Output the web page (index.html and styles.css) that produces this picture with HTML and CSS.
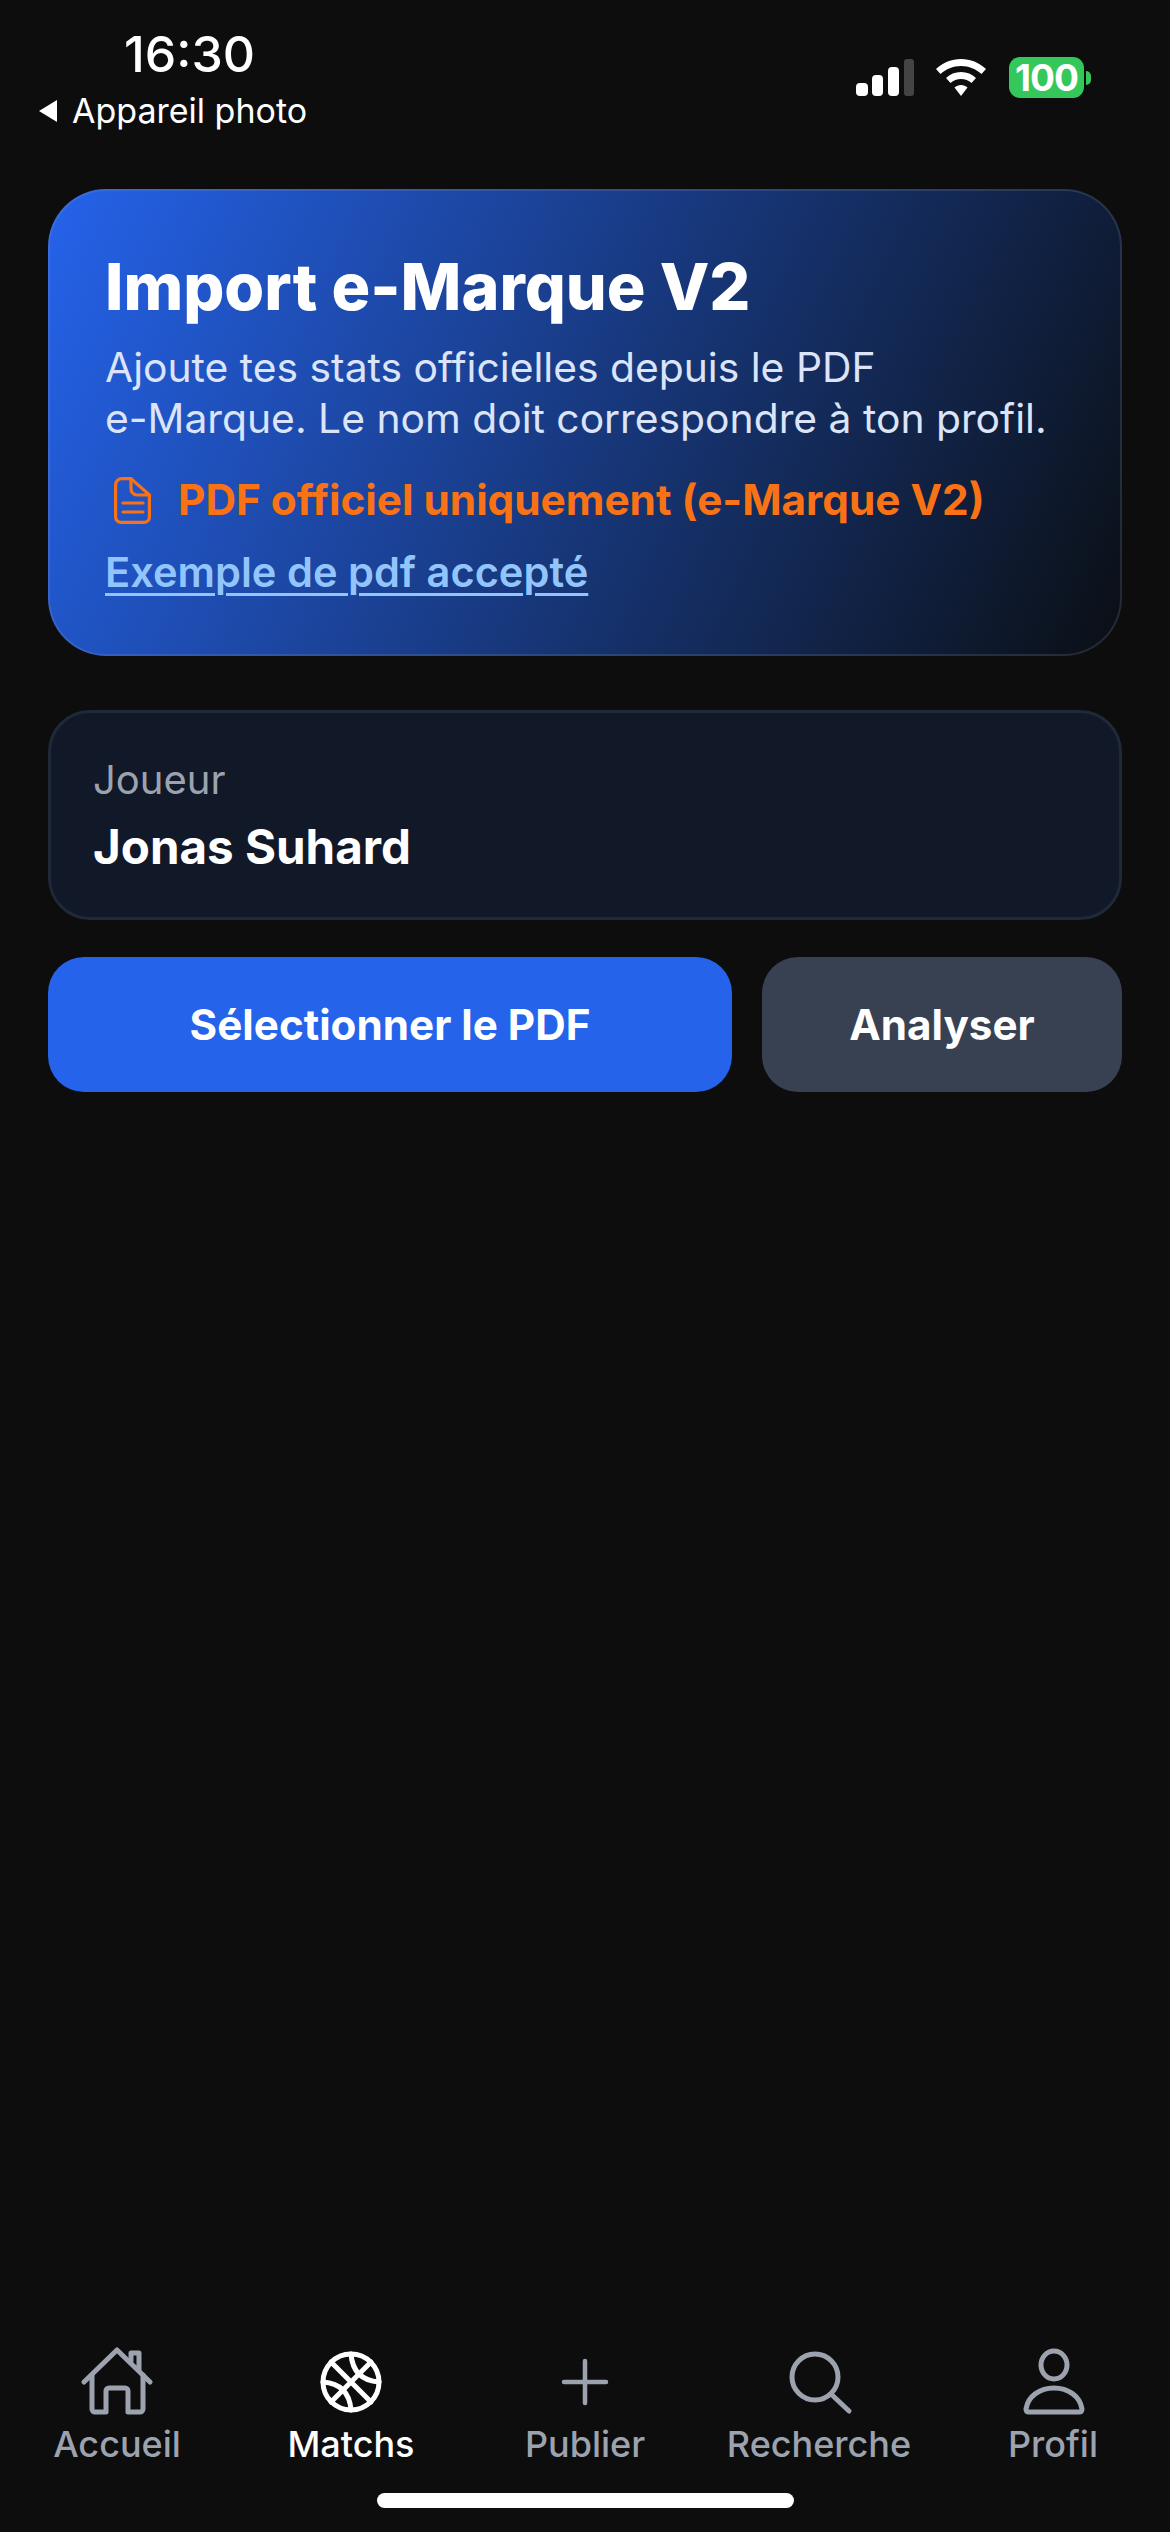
FILE: index.html
```html
<!DOCTYPE html>
<html lang="fr">
<head>
  <meta charset="UTF-8">
  <meta name="viewport" content="width=device-width, initial-scale=1.0">
  <title>Import e-Marque V2</title>
  <link rel="stylesheet" href="styles.css">
</head>
<body>
  <header class="status">
    <div class="status-left">
      <div class="time">16:30</div>
      <div class="back">
        <svg class="back-arrow" viewBox="0 0 20 24"><path d="M19 1V23L1 12Z"/></svg>
        <span>Appareil photo</span>
      </div>
    </div>
    <div class="status-right">
      <svg class="signal" viewBox="0 0 58 37">
        <rect x="0" y="24" width="12" height="13" rx="4" fill="#fff"/>
        <rect x="16" y="16" width="11" height="21" rx="4" fill="#fff"/>
        <rect x="32" y="8" width="11" height="29" rx="4" fill="#fff"/>
        <rect x="48" y="0" width="10" height="37" rx="3" fill="#444"/>
      </svg>
      <svg class="wifi" viewBox="0 0 50 37">
        <path d="M25 0C34.500 0 43 3.500 50 10L45.500 15C40 10 33 7 25 7C17 7 10 10 4.500 15L0 10C7 3.500 15.500 0 25 0Z"/>
        <path d="M25 13C31 13 36 15 40 19L35.500 24C32.500 21.500 29 20 25 20C21 20 17.500 21.500 14.500 24L10 19C14 15 19 13 25 13Z"/>
        <path d="M25 26C27.500 26 29.700 27 31.500 28.500L25 37L18.500 28.500C20.300 27 22.500 26 25 26Z"/>
      </svg>
      <div class="battery">
        <div class="battery-body">100</div>
        <div class="battery-tip"></div>
      </div>
    </div>
  </header>

  <main class="content">
    <section class="hero">
      <h1 class="hero-title">Import e-Marque V2</h1>
      <p class="hero-text">Ajoute tes stats officielles depuis le PDF<br>e-Marque. Le nom doit correspondre à ton profil.</p>
      <div class="hero-note">
        <svg class="note-icon" viewBox="0 0 37 47" fill="none" stroke="#f97316" stroke-width="3.200" stroke-linecap="round" stroke-linejoin="round">
          <path d="M8 1.600H17V12A6 6 0 0 0 23 18H35.400V40A5.400 5.400 0 0 1 30 45.400H7A5.400 5.400 0 0 1 1.600 40V8A6.400 6.400 0 0 1 8 1.600Z"/>
          <path d="M17 1.600L35.400 18"/>
          <path d="M9 26H29M9 35H29"/>
        </svg>
        <span>PDF officiel uniquement (e-Marque V2)</span>
      </div>
      <a class="hero-link" href="#">Exemple de pdf accepté</a>
    </section>

    <section class="player">
      <div class="player-label">Joueur</div>
      <div class="player-name">Jonas Suhard</div>
    </section>

    <div class="actions">
      <button class="btn btn-primary" type="button">Sélectionner le PDF</button>
      <button class="btn btn-muted" type="button">Analyser</button>
    </div>
  </main>

  <nav class="tabs">
    <a class="tab" href="#">
      <svg class="tab-icon" viewBox="0 0 72 72">
        <path d="M3 35L36 3L69 35"/>
        <path d="M11 28V62A3 3 0 0 0 14 65H25V44A3 3 0 0 1 28 41H44A3 3 0 0 1 47 44V65H59A3 3 0 0 0 62 62V28"/>
        <path d="M50 14V6H58V23"/>
      </svg>
      <span>Accueil</span>
    </a>
    <a class="tab tab-active" href="#">
      <svg class="tab-icon" viewBox="0 0 72 72">
        <circle cx="36" cy="35" r="28"/>
        <path d="M16 15L56 55M56 15L16 55"/>
        <path d="M36 7Q38 33 64 35M8 35Q34 37 36 63"/>
      </svg>
      <span>Matchs</span>
    </a>
    <a class="tab" href="#">
      <svg class="tab-icon tab-icon-thin" viewBox="0 0 72 72">
        <path d="M36 14V56M15 35H57"/>
      </svg>
      <span>Publier</span>
    </a>
    <a class="tab" href="#">
      <svg class="tab-icon" viewBox="0 0 72 72">
        <circle cx="32" cy="30" r="23"/>
        <path d="M48 47L66 64"/>
      </svg>
      <span>Recherche</span>
    </a>
    <a class="tab" href="#">
      <svg class="tab-icon" viewBox="0 0 72 72">
        <ellipse cx="37" cy="18" rx="13" ry="14"/>
        <path d="M9 62C11 49 23 41 37 41C51 41 63 49 65 62C65 64 64 65 62 65H12C10 65 9 64 9 62Z"/>
      </svg>
      <span>Profil</span>
    </a>
  </nav>
  <div class="home-bar"><div class="home-pill"></div></div>
</body>
</html>
```

FILE: styles.css
```css
* {
  box-sizing: border-box;
}
body {
  margin: 0;
  height: 2532px;
  display: flex;
  flex-direction: column;
  overflow: hidden;
  background-color: #0d0d0e;
  color: #fff;
  font-family: Inter, "Noto Sans", sans-serif;
}

/* status bar */
.status {
  height: 189px;
  flex-shrink: 0;
  display: flex;
  justify-content: space-between;
  align-items: flex-start;
  padding: 24px 79px 0 38px;
}
.time {
  margin-left: 86px;
  font-size: 50px;
  line-height: 60px;
  font-weight: 500;
}
.back {
  display: flex;
  align-items: center;
  gap: 14px;
  margin-top: 4px;
  font-size: 34px;
  line-height: 46px;
  font-weight: 400;
}
.back-arrow {
  width: 20px;
  height: 24px;
  fill: #fff;
}
.status-right {
  display: flex;
  align-items: center;
  margin-top: 33px;
}
.signal {
  width: 58px;
  height: 37px;
}
.wifi {
  width: 50px;
  height: 37px;
  margin-left: 22px;
  fill: #fff;
}
.battery {
  display: flex;
  align-items: center;
  margin-left: 23px;
}
.battery-body {
  width: 75px;
  height: 41px;
  border-radius: 11px;
  background-color: #34c759;
  font-size: 37px;
  line-height: 41px;
  font-weight: 700;
  letter-spacing: -1px;
  text-align: center;
}
.battery-tip {
  width: 5px;
  height: 14px;
  margin-left: 2px;
  border-radius: 0 7px 7px 0;
  background-color: #34c759;
}

/* main */
.content {
  flex: 1;
  padding: 0 48px;
}
.hero {
  height: 467px;
  padding: 59px 55px 0;
  border: 2px solid rgba(148, 163, 184, 0.18);
  border-radius: 58px;
  background: linear-gradient(115deg, #2563eb 0%, #0b0f14 100%);
  background-origin: border-box;
}
.hero-title {
  margin: 0;
  font-size: 64.500px;
  line-height: 74px;
  font-weight: 800;
}
.hero-text {
  margin: 18px 0 0;
  font-size: 40.800px;
  line-height: 51px;
  font-weight: 400;
  color: #dbe4f8;
}
.hero-note {
  display: flex;
  align-items: center;
  gap: 27px;
  margin: 31px 0 0 9px;
  font-size: 42.300px;
  line-height: 50px;
  font-weight: 700;
  color: #f97316;
}
.note-icon {
  width: 37px;
  height: 47px;
  flex-shrink: 0;
}
.hero-link {
  display: inline-block;
  margin-top: 22px;
  font-size: 41.600px;
  line-height: 50px;
  font-weight: 600;
  color: #93c5fd;
  text-decoration: underline;
  text-decoration-thickness: 3px;
  text-underline-offset: 6px;
}
.player {
  height: 210px;
  margin-top: 54px;
  padding: 42px 42px 0;
  border: 3px solid #1f2937;
  border-radius: 42px;
  background-color: #111827;
}
.player-label {
  font-size: 40px;
  line-height: 50px;
  color: #9ca3af;
}
.player-name {
  margin-top: 14px;
  font-size: 47.500px;
  line-height: 56px;
  font-weight: 700;
}
.actions {
  display: flex;
  gap: 30px;
  margin-top: 37px;
}
.btn {
  height: 135px;
  border: none;
  border-radius: 36px;
  color: #fff;
  font-family: inherit;
  font-size: 42.200px;
  font-weight: 700;
}
.btn-primary {
  width: 684px;
  background-color: #2563eb;
}
.btn-muted {
  flex: 1;
  background-color: #374151;
}

/* bottom tabs */
.tabs {
  display: flex;
  flex-shrink: 0;
}
.tab {
  flex: 1;
  display: flex;
  flex-direction: column;
  align-items: center;
  color: #9ca3af;
  font-size: 36px;
  line-height: 44px;
  font-weight: 500;
  text-decoration: none;
}
.tab-active {
  color: #fff;
}
.tab-icon {
  width: 72px;
  height: 72px;
  margin-bottom: 3px;
  fill: none;
  stroke: currentColor;
  stroke-width: 5;
  stroke-linecap: round;
  stroke-linejoin: round;
}
.tab-icon-thin {
  stroke-width: 4.500;
}
.home-bar {
  display: flex;
  justify-content: center;
  flex-shrink: 0;
  height: 66px;
  padding-top: 27px;
}
.home-pill {
  width: 417px;
  height: 15px;
  border-radius: 8px;
  background-color: #fff;
}
```
